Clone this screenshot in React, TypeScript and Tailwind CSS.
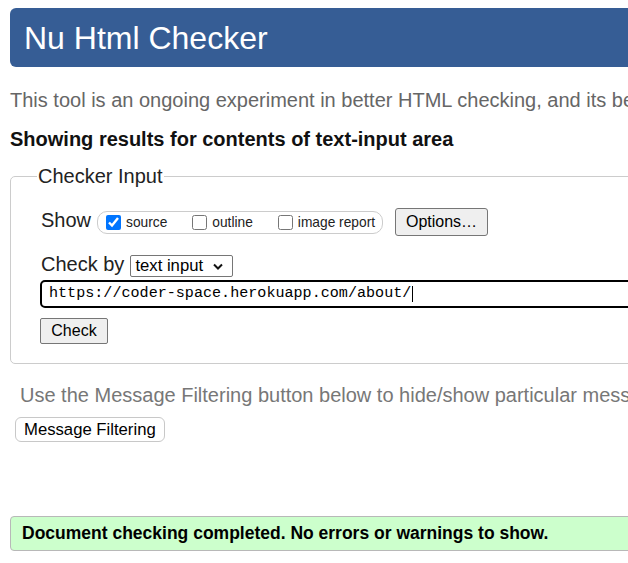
import React from "react";

const sans = "font-['Liberation_Sans',Arial,sans-serif]";

function Checkbox({ checked, label }: { checked?: boolean; label: string }) {
  return (
    <label className="flex items-center">
      <input type="checkbox" defaultChecked={checked} className="h-[15px] w-[15px]" />
      <span className="ml-[5px] mt-[2px] text-[13.75px] text-[#222]">{label}</span>
    </label>
  );
}

function CheckerInput() {
  return (
    <fieldset className="mt-[14px] rounded-[5px] border border-[#cccccc] pb-[19px] pl-[26px]">
      <legend className="px-[1px] text-[20px] leading-[23px] text-[#222]">Checker Input</legend>
      <div className="ml-[3px]">
        <div className="ml-[1px] mt-[20px] flex items-center">
          <span className="mb-[4px] text-[20px] leading-[23px] text-[#222]">Show</span>
          <div className="ml-[6px] flex h-[23px] items-center rounded-[10px] border border-[#cccccc] pl-[8px] pr-[7px]">
            <Checkbox checked label="source" />
            <div className="ml-[25px]">
              <Checkbox label="outline" />
            </div>
            <div className="ml-[25px]">
              <Checkbox label="image report" />
            </div>
          </div>
          <button className="ml-[12px] flex h-[28px] w-[93px] items-center justify-center rounded-[3px] border border-[#767676] bg-[#efefef] text-[16px] text-black">
            Options…
          </button>
        </div>
        <div className="ml-[1px] mt-[16px] flex items-center">
          <span className="text-[20px] leading-[23px] text-[#222]">Check by</span>
          <div className="ml-[6px] mt-[3px] flex h-[22px] w-[103px] items-center justify-between rounded-[2px] border border-[#767676] pl-[4px] pr-[9px]">
            <span className="text-[16.7px] leading-none text-black">text input</span>
            <svg width="10" height="7" viewBox="0 0 10 7">
              <path d="M1 1.5 L5 5.5 L9 1.5" fill="none" stroke="#111" strokeWidth="2" />
            </svg>
          </div>
        </div>
        <div className="mt-[3px] flex h-[28px] w-[900px] items-center rounded-[5px] border-2 border-black pl-[7px]">
          <span className="font-['Liberation_Mono',monospace] text-[15.1px] leading-none text-black">
            https://coder-space.herokuapp.com/about/
          </span>
          <span className="ml-[1px] inline-block h-[16px] w-px bg-black" />
        </div>
        <button className="mt-[10px] flex h-[26px] w-[68px] items-center justify-center rounded-[2px] border border-[#767676] bg-[#efefef] text-[16px] text-black">
          Check
        </button>
      </div>
    </fieldset>
  );
}

export default function App() {
  return (
    <div className={`h-[563px] w-[628px] overflow-hidden bg-white ${sans}`}>
      <div className="w-[1000px] pl-[10px] pt-[8px]">
        <div className="flex h-[59px] items-center rounded-l-[6px] bg-[#365d95] pl-[14px]">
          <h1 className="text-[32px] leading-none text-white">Nu Html Checker</h1>
        </div>
        <p className="mt-[22px] whitespace-nowrap text-[20px] leading-[23px] text-[#666]">
          This tool is an ongoing experiment in better HTML checking, and its behavior remains subject to change
        </p>
        <h2 className="mt-[16px] whitespace-nowrap text-[20px] font-bold leading-[23px] text-[#111]">
          Showing results for contents of text-input area
        </h2>
        <CheckerInput />
        <p className="ml-[10px] mt-[20px] whitespace-nowrap text-[20px] leading-[23px] text-[#777]">
          Use the Message Filtering button below to hide/show particular messages, and to see total counts of errors and warnings.
        </p>
        <button className="ml-[5px] mt-[10px] flex h-[25px] items-center rounded-[6px] border border-[#c8c8c8] bg-white px-[8px] text-[16.7px] text-black">
          Message Filtering
        </button>
        <div className="mt-[74px] flex h-[35px] items-center rounded-[4px] border border-[#b8b8b8] bg-[#ccffcc] pl-[11px]">
          <span className="text-[17.5px] font-bold text-black">
            Document checking completed. No errors or warnings to show.
          </span>
        </div>
      </div>
    </div>
  );
}
